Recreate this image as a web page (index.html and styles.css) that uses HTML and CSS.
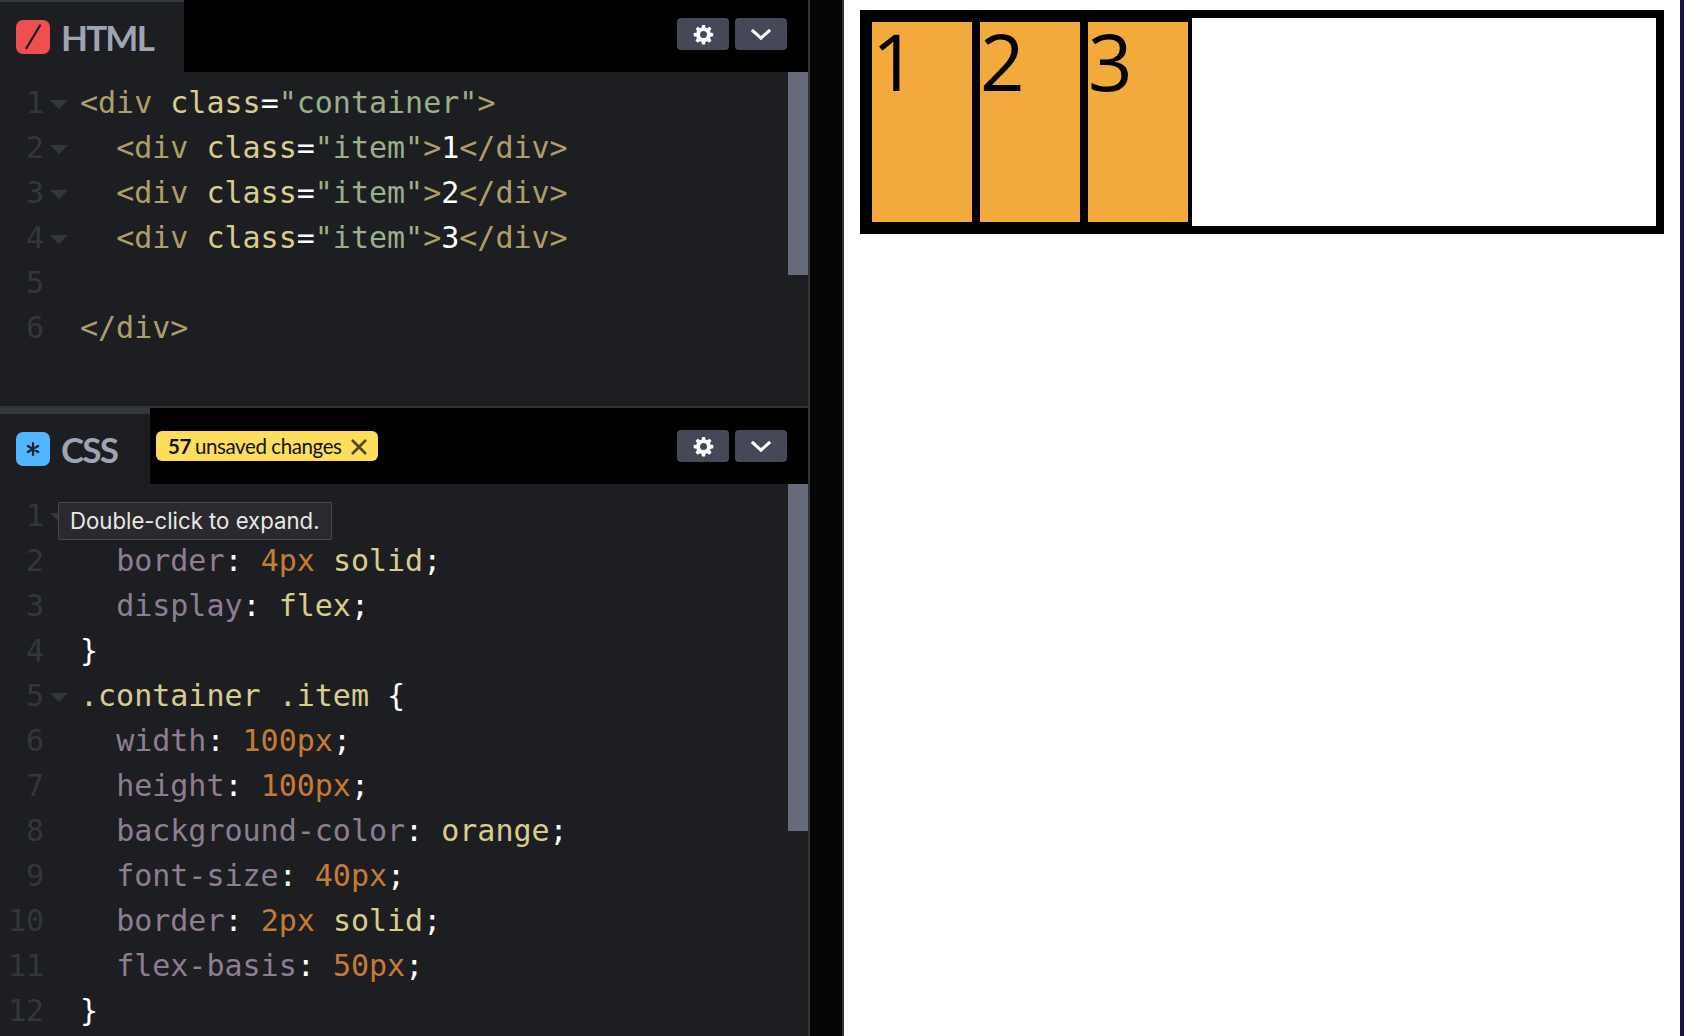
FILE: index.html
```html
<!DOCTYPE html>
<html lang="en">
<head>
<meta charset="utf-8">
<title>Flexbox pen</title>
<link rel="stylesheet" href="styles.css">
</head>
<body>
<main class="app">
  <section class="editors">
    <div class="editor editor-html">
      <header class="editor-head">
        <div class="tab tab-html">
          <span class="badge badge-red"><svg viewBox="0 0 34 34" class="badge-svg"><path d="M24 5.500 L10.500 28" class="badge-line"/></svg></span>
          <span class="tab-name">HTML</span>
        </div>
        <div class="head-fill">
          <button class="tool" type="button"><svg viewBox="0 0 24 24" class="gear"><path fill-rule="evenodd" d="M10.2 1h3.6l.5 3 1.9.8 2.5-1.8 2.5 2.5-1.8 2.5.8 1.9 3 .5v3.6l-3 .5-.8 1.9 1.8 2.5-2.5 2.5-2.5-1.8-1.9.8-.5 3h-3.6l-.5-3-1.9-.8-2.5 1.8-2.5-2.5 1.8-2.5-.8-1.9-3-.5v-3.6l3-.5.8-1.9L3 5.500 5.500 3 8 4.800l1.900-.8zM12 8a4 4 0 1 0 0 8 4 4 0 0 0 0-8z"/></svg></button>
          <button class="tool" type="button"><svg viewBox="0 0 24 14" class="chev"><path d="M2 2l10 9 10-9"/></svg></button>
        </div>
      </header>
      <div class="code code-top">
        <div class="scrollbar scrollbar-top"></div>
        <div class="line"><span class="num">1</span><span class="fold"></span><span class="src"><span class="tg">&lt;div</span> <span class="at">class</span><span class="eq">=</span><span class="st">"container"</span><span class="tg">&gt;</span></span></div>
        <div class="line"><span class="num">2</span><span class="fold"></span><span class="src">  <span class="tg">&lt;div</span> <span class="at">class</span><span class="eq">=</span><span class="st">"item"</span><span class="tg">&gt;</span><span class="eq">1</span><span class="tg">&lt;/div&gt;</span></span></div>
        <div class="line"><span class="num">3</span><span class="fold"></span><span class="src">  <span class="tg">&lt;div</span> <span class="at">class</span><span class="eq">=</span><span class="st">"item"</span><span class="tg">&gt;</span><span class="eq">2</span><span class="tg">&lt;/div&gt;</span></span></div>
        <div class="line"><span class="num">4</span><span class="fold"></span><span class="src">  <span class="tg">&lt;div</span> <span class="at">class</span><span class="eq">=</span><span class="st">"item"</span><span class="tg">&gt;</span><span class="eq">3</span><span class="tg">&lt;/div&gt;</span></span></div>
        <div class="line"><span class="num">5</span><span class="nofold"></span><span class="src"></span></div>
        <div class="line"><span class="num">6</span><span class="nofold"></span><span class="src"><span class="tg">&lt;/div&gt;</span></span></div>
      </div>
    </div>
    <div class="editor editor-css">
      <header class="editor-head editor-head-css">
        <div class="tab tab-css">
          <span class="badge badge-blue"><svg viewBox="0 0 34 34" class="badge-svg"><path d="M17 11v12M11.800 14l10.400 6M22.200 14l-10.400 6" class="badge-star"/></svg></span>
          <span class="tab-name">CSS</span>
        </div>
        <div class="head-fill head-fill-css">
          <div class="unsaved"><b class="unsaved-count">57</b><span class="unsaved-text">unsaved changes</span><svg viewBox="0 0 18 18" class="unsaved-x"><path d="M2 2l14 14M16 2L2 16"/></svg></div>
          <button class="tool" type="button"><svg viewBox="0 0 24 24" class="gear"><path fill-rule="evenodd" d="M10.2 1h3.6l.5 3 1.9.8 2.5-1.8 2.5 2.5-1.8 2.5.8 1.9 3 .5v3.6l-3 .5-.8 1.9 1.8 2.5-2.5 2.5-2.5-1.8-1.9.8-.5 3h-3.6l-.5-3-1.9-.8-2.5 1.8-2.5-2.5 1.8-2.5-.8-1.9-3-.5v-3.6l3-.5.8-1.9L3 5.500 5.500 3 8 4.800l1.900-.8zM12 8a4 4 0 1 0 0 8 4 4 0 0 0 0-8z"/></svg></button>
          <button class="tool" type="button"><svg viewBox="0 0 24 14" class="chev"><path d="M2 2l10 9 10-9"/></svg></button>
        </div>
      </header>
      <div class="code code-bottom">
        <div class="scrollbar scrollbar-bottom"></div>
        <div class="tooltip">Double-click to expand.</div>
        <div class="line"><span class="num">1</span><span class="fold"></span><span class="src"><span class="at">.container</span> <span class="eq">{</span></span></div>
        <div class="line"><span class="num">2</span><span class="nofold"></span><span class="src">  <span class="pr">border</span><span class="eq">:</span> <span class="nm">4px</span> <span class="at">solid</span><span class="eq">;</span></span></div>
        <div class="line"><span class="num">3</span><span class="nofold"></span><span class="src">  <span class="pr">display</span><span class="eq">:</span> <span class="at">flex</span><span class="eq">;</span></span></div>
        <div class="line"><span class="num">4</span><span class="nofold"></span><span class="src"><span class="eq">}</span></span></div>
        <div class="line"><span class="num">5</span><span class="fold"></span><span class="src"><span class="at">.container .item</span> <span class="eq">{</span></span></div>
        <div class="line"><span class="num">6</span><span class="nofold"></span><span class="src">  <span class="pr">width</span><span class="eq">:</span> <span class="nm">100px</span><span class="eq">;</span></span></div>
        <div class="line"><span class="num">7</span><span class="nofold"></span><span class="src">  <span class="pr">height</span><span class="eq">:</span> <span class="nm">100px</span><span class="eq">;</span></span></div>
        <div class="line"><span class="num">8</span><span class="nofold"></span><span class="src">  <span class="pr">background-color</span><span class="eq">:</span> <span class="at">orange</span><span class="eq">;</span></span></div>
        <div class="line"><span class="num">9</span><span class="nofold"></span><span class="src">  <span class="pr">font-size</span><span class="eq">:</span> <span class="nm">40px</span><span class="eq">;</span></span></div>
        <div class="line"><span class="num">10</span><span class="nofold"></span><span class="src">  <span class="pr">border</span><span class="eq">:</span> <span class="nm">2px</span> <span class="at">solid</span><span class="eq">;</span></span></div>
        <div class="line"><span class="num">11</span><span class="nofold"></span><span class="src">  <span class="pr">flex-basis</span><span class="eq">:</span> <span class="nm">50px</span><span class="eq">;</span></span></div>
        <div class="line"><span class="num">12</span><span class="nofold"></span><span class="src"><span class="eq">}</span></span></div>
      </div>
    </div>
  </section>
  <div class="gutter"></div>
  <section class="preview">
    <div class="container">
      <div class="item">1</div>
      <div class="item">2</div>
      <div class="item">3</div>
    </div>
  </section>
</main>
</body>
</html>
```
FILE: styles.css
```css
* { box-sizing: border-box; }
html, body { margin: 0; height: 100%; background: #fff; overflow: hidden; }
.app { display: flex; width: 1684px; height: 1036px; overflow: hidden; }
.editors { width: 810px; height: 1036px; display: flex; flex-direction: column; border-right: 2px solid #333; background: #1d1e22; }
.editor-html { height: 406px; display: flex; flex-direction: column; }
.editor-css { flex: 1; display: flex; flex-direction: column; border-top: 2px solid #333; min-height: 0; }
.editor-head { height: 72px; flex: none; display: flex; background: #000; }
.editor-head-css { height: 76px; }
.tab { display: flex; align-items: center; gap: 11px; padding-left: 16px; background: #1d1e22; border-top: 2px solid #343640; color: #9fa3b3; }
.tab-html { width: 184px; }
.tab-css { width: 150px; border-top-width: 6px; }
.badge { width: 34px; height: 34px; border-radius: 7px; display: flex; align-items: center; justify-content: center; flex: none; }
.badge-red { background: #ef4f4f; }
.badge-blue { background: #4fb6ff; }
.badge-svg { width: 34px; height: 34px; }
.badge-line { stroke: #1d1e22; stroke-width: 2.4; stroke-linecap: round; fill: none; }
.badge-star { stroke: #1d2630; stroke-width: 2.2; stroke-linecap: round; fill: none; }
.tab-name { font: 700 35px/1 Lato, sans-serif; letter-spacing: -1.8px; }
.head-fill { flex: 1; display: flex; align-items: flex-start; justify-content: flex-end; gap: 6px; padding: 18px 21px 0 0; }
.head-fill-css { padding-top: 22px; }
.tool { width: 52px; height: 32px; padding: 0; border: 0; border-radius: 4px; background: #444857; display: flex; align-items: center; justify-content: center; }
.gear { width: 21px; height: 21px; fill: #fff; }
.chev { width: 22px; height: 13px; fill: none; stroke: #fff; stroke-width: 3.4; }
.unsaved { margin-right: auto; margin-left: 6px; margin-top: 1px; height: 30px; width: 222px; padding-left: 12px; display: flex; align-items: center; border-radius: 6px; background: #fcdd5c; color: #111; font: 400 20.500px/1 Lato, sans-serif; letter-spacing: -.4px; }
.unsaved-count { font-weight: 700; margin-right: 4px; }
.unsaved-x { width: 18px; height: 18px; margin: 2px 0 0 8px; fill: none; stroke: #4f4820; stroke-width: 2.6; }
.code { position: relative; flex: 1; min-height: 0; padding-top: 8px; overflow: hidden; font: 30px/45px "DejaVu Sans Mono", monospace; }
.code-bottom { padding-top: 9px; }
.line { display: flex; height: 45px; }
.num { width: 44px; text-align: right; color: #34363e; flex: none; }
.fold { width: 0; height: 0; margin: 20px 0 0 6px; border: 9px solid transparent; border-top: 9px solid #34363e; border-bottom: 0; flex: none; }
.nofold { width: 18px; margin-left: 6px; flex: none; }
.src { margin-left: 12px; white-space: pre; color: #fff; }
.tg { color: #ae9e67; }
.at { color: #d9cc8d; }
.eq { color: #fff; }
.st { color: #9aaf8b; }
.pr { color: #8f7d93; }
.nm { color: #c67b35; }
.scrollbar { position: absolute; right: 0; top: 0; width: 20px; background: #676a7a; }
.scrollbar-top { height: 203px; }
.scrollbar-bottom { height: 347px; }
.tooltip { position: absolute; left: 58px; top: 18px; width: 274px; height: 38px; padding-left: 11px; background: #2a292d; border: 1px solid #48484b; border-radius: 1px; color: #e8e8e8; font: 400 22.200px/35px Inter, sans-serif; white-space: nowrap; z-index: 2; }
.gutter { width: 34px; background: #050505; border-right: 2px solid #343434; flex: none; }
.preview { flex: 1; min-width: 0; padding: 10px 16px 0 16px; background: #fff; border-right: 4px solid #1c1045; }
.container { display: flex; height: 224px; border: 8px solid #000; background: #fff; }
.item { width: 108px; height: 208px; border: 4px solid #000; background: #f2aa3c; color: #000; font: 78px/78px "Open Sans", sans-serif; }
```
